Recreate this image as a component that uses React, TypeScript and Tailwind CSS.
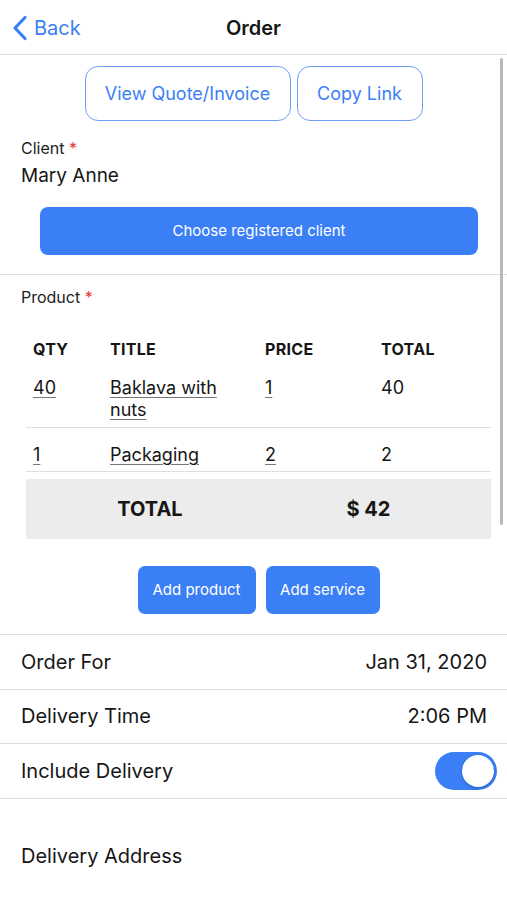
import React from 'react';

const ROWS = [
  { qty: '40', title: ['Baklava with', 'nuts'], price: '1', total: '40', pad: 'pt-[17px] pb-[6px]' },
  { qty: '1', title: ['Packaging'], price: '2', total: '2', pad: 'pt-[16px] pb-[5px]' },
];

const SETTINGS = [
  { label: 'Order For', value: 'Jan 31, 2020' },
  { label: 'Delivery Time', value: '2:06 PM' },
];

function Toggle() {
  return (
    <div className="w-[62px] h-[38px] rounded-full bg-[#3b7ff6] p-[3px] flex justify-end">
      <div className="w-[32px] h-[32px] rounded-full bg-white shadow-[0_1px_3px_rgba(0,0,0,0.25)]" />
    </div>
  );
}

export default function App() {
  return (
    <div className="relative w-[507px] h-[900px] bg-white text-[#161616] overflow-hidden" style={{ fontFamily: 'Inter, "Noto Sans", sans-serif' }}>
      {/* Nav bar */}
      <div className="relative h-[55px] flex items-center justify-center border-b border-[#dedede]">
        <button className="absolute left-[10px] top-[14px] flex items-center gap-[4px] text-[#3b7ff6]">
          <svg width="20" height="28" viewBox="0 0 20 28" fill="none">
            <path d="M15 3.5 L5 14 L15 24.5" stroke="#3b7ff6" strokeWidth="3.2" strokeLinecap="round" strokeLinejoin="round" />
          </svg>
          <span className="text-[20px] leading-[28px]">Back</span>
        </button>
        <h1 className="text-[20px] font-semibold pt-[2px]">Order</h1>
      </div>

      {/* scroll indicator */}
      <div className="absolute right-[4px] top-[58px] w-[3px] h-[467px] rounded-full bg-[#b9b9b9]" />

      <div className="flex justify-center gap-[6px] mt-[11px]">
        <button className="w-[206px] h-[55px] rounded-[13px] border-[1.5px] border-[#6f9ff5] text-[#3b7ff6] text-[18px]">View Quote/Invoice</button>
        <button className="w-[126px] h-[55px] rounded-[13px] border-[1.5px] border-[#6f9ff5] text-[#3b7ff6] text-[18px]">Copy Link</button>
      </div>

      <div className="px-[21px] mt-[17px]">
        <div className="text-[16px] leading-[20px] text-[#222]">Client <span className="text-[#e53935]">*</span></div>
        <div className="text-[19px] leading-[26px] mt-[5px]">Mary Anne</div>
      </div>

      <button className="ml-[40px] mt-[18px] w-[438px] h-[48px] rounded-[8px] bg-[#3b7ff6] text-white text-[15px]">Choose registered client</button>

      <div className="mt-[19px] border-t border-[#dcdcdc]" />

      <div className="px-[21px] mt-[12px] text-[16px] leading-[20px] text-[#222]">Product <span className="text-[#e53935]">*</span></div>

      {/* Product table */}
      <div className="ml-[26px] w-[465px] mt-[31px]">
        <div className="grid grid-cols-[77px_155px_116px_103px] text-[16px] leading-[22px] font-bold tracking-[0.3px] px-[7px]">
          <div>QTY</div>
          <div>TITLE</div>
          <div>PRICE</div>
          <div>TOTAL</div>
        </div>
        {ROWS.map((r, i) => (
          <div key={i} className={`grid grid-cols-[77px_155px_116px_103px] px-[7px] text-[18px] leading-[22px] border-b border-[#dedede] ${r.pad}`}>
            <div className="underline underline-offset-[3px] decoration-[#777]">{r.qty}</div>
            <div className="underline underline-offset-[3px] decoration-[#777]">
              {r.title.map((t, j) => (
                <div key={j}>{t}</div>
              ))}
            </div>
            <div className="underline underline-offset-[3px] decoration-[#777]">{r.price}</div>
            <div>{r.total}</div>
          </div>
        ))}
        <div className="mt-[7px] h-[60px] bg-[#ececec] grid grid-cols-[232px_233px] items-center text-[20px] font-bold">
          <div className="text-center pl-[16px]">TOTAL</div>
          <div className="text-center pr-[12px]">$ 42</div>
        </div>
      </div>

      <div className="flex justify-center gap-[10px] mt-[27px] pl-[10px]">
        <button className="w-[118px] h-[48px] rounded-[7px] bg-[#3b7ff6] text-white text-[15px]">Add product</button>
        <button className="w-[114px] h-[48px] rounded-[7px] bg-[#3b7ff6] text-white text-[15px]">Add service</button>
      </div>

      <div className="mt-[20px] border-t-[1.5px] border-[#dcdcdc]">
        {SETTINGS.map((s) => (
          <div key={s.label} className="h-[54.5px] flex items-center justify-between pl-[21px] pr-[20px] border-b-[1.5px] border-[#dcdcdc] text-[20px]">
            <span>{s.label}</span>
            <span>{s.value}</span>
          </div>
        ))}
        <div className="h-[55px] flex items-center justify-between pl-[21px] pr-[10px] border-b-[1.5px] border-[#dcdcdc] text-[20px]">
          <span>Include Delivery</span>
          <Toggle />
        </div>
      </div>

      <div className="pl-[21px] mt-[42px] text-[20px]">Delivery Address</div>
    </div>
  );
}
